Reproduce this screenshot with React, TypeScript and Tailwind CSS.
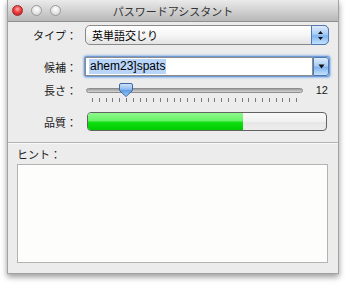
import React from "react";

const jp = "font-['Noto_Sans_CJK_JP','Noto_Sans_CJK_SC',sans-serif]";

const Light = ({ red }: { red?: boolean }) => (
  <div
    className={
      red
        ? "h-[11px] w-[11px] rounded-full border border-[#a0262a] bg-[radial-gradient(circle_at_50%_35%,#ffb0ae_0%,#f0403c_45%,#b8151a_100%)]"
        : "h-[11px] w-[11px] rounded-full border border-[#9a9a9a] bg-[radial-gradient(circle_at_50%_35%,#ffffff_0%,#e4e4e4_55%,#c6c6c6_100%)]"
    }
  />
);

const Label = ({ text }: { text: string }) => (
  <div className={`w-[69px] shrink-0 text-right text-[11px] leading-[16px] text-[#1a1a1a] ${jp}`}>{text}</div>
);

export default function App() {
  const ticks = Array.from({ length: 31 });

  return (
    <div className="h-[284px] w-[346px] bg-white pl-[7px]">
      <div className="flex h-[274px] w-[332px] flex-col border-x border-b border-[#a2a2a2] bg-[#ececec] shadow-[0_3px_6px_rgba(0,0,0,0.4)]">
        {/* title bar */}
        <div className="grid h-[22px] shrink-0 grid-cols-[1fr_auto_1fr] items-center border-b border-[#8e8e8e] bg-gradient-to-b from-[#ebebeb] to-[#b8b8b8]">
          <div className="flex items-center gap-[8px] pl-[4px]">
            <Light red />
            <Light />
            <Light />
          </div>
          <div className={`text-[11px] leading-[14px] text-[#333] ${jp}`}>パスワードアシスタント</div>
          <div />
        </div>

        {/* popup row */}
        <div className="mt-[3px] flex items-center gap-[8px]">
          <Label text="タイプ：" />
          <div className="flex h-[20px] w-[244px] items-center rounded-[5px] border border-[#8a8a8a] bg-gradient-to-b from-white via-[#f6f6f6] to-[#e3e3e3]">
            <span className={`pl-[6px] text-[11px] leading-[14px] text-black ${jp}`}>英単語交じり</span>
            <div className="ml-auto flex h-[20px] w-[18px] -mr-px -my-px items-center justify-center rounded-r-[5px] border border-[#4f78b5] bg-[linear-gradient(to_bottom,#dcebfb_0%,#a9cdf5_45%,#7fb3ee_55%,#c4e2ff_100%)]">
              <svg width="7" height="11" viewBox="0 0 7 11">
                <path d="M3.5 1 L6 4 L1 4 Z" fill="#111" />
                <path d="M3.5 10 L6 7 L1 7 Z" fill="#111" />
              </svg>
            </div>
          </div>
        </div>

        {/* combo row */}
        <div className="mt-[12px] flex items-center gap-[8px]">
          <Label text="候補：" />
          <div className="flex h-[19px] w-[244px] rounded-[2px] shadow-[0_0_0_1px_#6f9ad6,0_0_2px_2px_#9ec0ec]">
            <div className="flex h-full flex-1 items-center border border-[#8c8c8c] bg-white pl-[3px]">
              <span className="bg-[#b8d4f8] px-px font-['Liberation_Sans',Arial,sans-serif] text-[12px] leading-[15px] text-black">
                ahem23]spats
              </span>
            </div>
            <div className="flex h-full w-[16px] items-center justify-center rounded-r-[3px] border border-[#4f78b5] bg-[linear-gradient(to_bottom,#dcebfb_0%,#a9cdf5_45%,#7fb3ee_55%,#c4e2ff_100%)]">
              <svg width="7" height="5" viewBox="0 0 7 5">
                <path d="M0.5 0.5 L6.5 0.5 L3.5 4.5 Z" fill="#111" />
              </svg>
            </div>
          </div>
        </div>

        {/* slider row */}
        <div className="mt-[6px] flex items-start gap-[8px]">
          <Label text="長さ：" />
          <div className="relative flex h-[21px] w-[244px]">
            <div className="flex w-[217px] flex-col">
              <div className="ml-px mt-[6px] h-[5px] w-[217px] rounded-full border border-[#8d8d8d] bg-gradient-to-b from-[#9c9c9c] to-[#d6d6d6]" />
              <div className="ml-[7px] mt-[5px] flex h-[4px] w-[205px] justify-between">
                {ticks.map((_, i) => (
                  <div key={i} className="h-[4px] w-px bg-[#7a7a7a]" />
                ))}
              </div>
            </div>
            <div className="ml-auto pr-px text-right font-['Liberation_Sans',Arial,sans-serif] text-[11px] leading-[16px] text-[#1a1a1a]">
              12
            </div>
            <svg className="absolute left-[33px] top-[0px]" width="16" height="16" viewBox="0 0 16 16">
              <defs>
                <linearGradient id="knob" x1="0" y1="0" x2="0" y2="1">
                  <stop offset="0" stopColor="#d5e7fb" />
                  <stop offset="0.45" stopColor="#8dbbf0" />
                  <stop offset="0.55" stopColor="#5f9be4" />
                  <stop offset="1" stopColor="#a6cef8" />
                </linearGradient>
              </defs>
              <path
                d="M3 1.5 H13 Q14.5 1.5 14.5 3 V8.5 L8 14.5 L1.5 8.5 V3 Q1.5 1.5 3 1.5 Z"
                fill="url(#knob)"
                stroke="#3d66a8"
                strokeWidth="1"
              />
            </svg>
          </div>
        </div>

        {/* quality row */}
        <div className="mt-[9px] flex items-center gap-[8px]">
          <Label text="品質：" />
          <div className="ml-[2px] flex h-[19px] w-[240px] overflow-hidden rounded-[4px] border border-[#626262] bg-[linear-gradient(to_bottom,#f9f9f9_0%,#f1f1f1_50%,#e6e6e6_51%,#ededed_100%)]">
            <div className="h-full w-[155px] bg-[linear-gradient(to_bottom,#8ef88e_0%,#66f266_48%,#10df10_52%,#00cc00_100%)]" />
          </div>
        </div>

        {/* separator */}
        <div className="mt-[11px] h-px w-full bg-[#b4b4b4]" />
        <div className="h-px w-full bg-[#f8f8f8]" />

        <div className={`ml-[9px] mt-[3px] text-[11px] leading-[14px] text-[#1a1a1a] ${jp}`}>ヒント：</div>
        <div className="ml-[9px] mt-[3px] h-[99px] w-[311px] border border-[#b3b3b3] bg-[#fdfdfb]" />
      </div>
    </div>
  );
}
